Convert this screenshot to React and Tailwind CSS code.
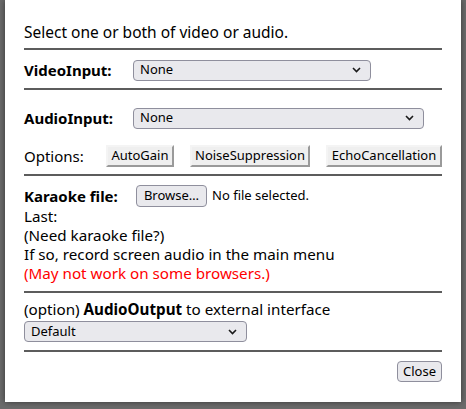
import React from "react";

const Chevron = () => (
  <svg width="9" height="6" viewBox="0 0 9 6" className="shrink-0">
    <polyline points="1,1 4.5,4.5 8,1" fill="none" stroke="#1a1a1a" strokeWidth="1.6" />
  </svg>
);

const Select = ({ w, label }) => (
  <div
    className={`${w} h-[21px] flex items-center justify-between border border-[#8f8f9d] rounded-[4px] bg-[#e9e9ed] pl-[6px] pr-[9px] text-[13px] text-black`}
  >
    <span>{label}</span>
    <Chevron />
  </div>
);

const OptBtn = ({ w, children }) => (
  <div
    className={`${w} h-[22px] flex items-center justify-center bg-[#efefef] border-2 border-t-[#f4f4f4] border-l-[#f4f4f4] border-b-[#9a9a9a] border-r-[#9a9a9a] text-[13px] text-black`}
  >
    {children}
  </div>
);

const Hr = ({ cls }) => <div className={`h-[2px] bg-[#5c5c5c] ${cls}`} />;

export default function App() {
  return (
    <div
      className="w-[466px] h-[409px] bg-[#6b6b6b] overflow-hidden"
      style={{ fontFamily: '"Noto Sans", sans-serif' }}
    >
      <div className="ml-[5px] w-[456px] h-[402px] bg-white px-[19px] pt-[22px] text-black shadow-[0_0_6px_rgba(0,0,0,0.5)]">
        <div className="text-[15.5px] leading-[20px]">Select one or both of video or audio.</div>
        <Hr cls="mt-[6px]" />
        <div className="mt-[9px] flex items-center h-[22px]">
          <div className="w-[109px] font-bold text-[15px]">VideoInput:</div>
          <Select w="w-[238px]" label="None" />
        </div>
        <Hr cls="mt-[7px]" />
        <div className="mt-[17px] flex items-center h-[22px]">
          <div className="w-[109px] font-bold text-[15px]">AudioInput:</div>
          <Select w="w-[291px]" label="None" />
        </div>
        <div className="mt-[16px] flex items-center h-[22px]">
          <div className="w-[82px] text-[15px]">Options:</div>
          <OptBtn w="w-[68px]">AutoGain</OptBtn>
          <div className="w-[16px]" />
          <OptBtn w="w-[120px]">NoiseSuppression</OptBtn>
          <div className="w-[16px]" />
          <OptBtn w="w-[116px]">EchoCancellation</OptBtn>
        </div>
        <Hr cls="mt-[7px]" />
        <div className="mt-[9px] flex items-center h-[22px]">
          <div className="w-[112px] font-bold text-[15px]">Karaoke file:</div>
          <div className="w-[71px] h-[22px] flex items-center justify-center border border-[#8f8f9d] rounded-[4px] bg-[#e9e9ed] text-[13px]">
            Browse…
          </div>
          <span className="ml-[5px] text-[13px]">No file selected.</span>
        </div>
        <div className="text-[15.2px] leading-[19px]">
          <div>Last:</div>
          <div>(Need karaoke file?)</div>
          <div>If so, record screen audio in the main menu</div>
          <div className="text-[#ff0000]">(May not work on some browsers.)</div>
        </div>
        <Hr cls="mt-[8px]" />
        <div className="mt-[7px] text-[15.2px] leading-[19px]">
          (option) <b>AudioOutput</b> to external interface
        </div>
        <div className="mt-[2px]">
          <Select w="w-[223px]" label="Default" />
        </div>
        <Hr cls="mt-[8px]" />
        <div className="mt-[9px] flex justify-end">
          <div className="w-[45px] h-[21px] flex items-center justify-center border border-[#8f8f9d] rounded-[4px] bg-[#e9e9ed] text-[13px]">
            Close
          </div>
        </div>
      </div>
    </div>
  );
}
